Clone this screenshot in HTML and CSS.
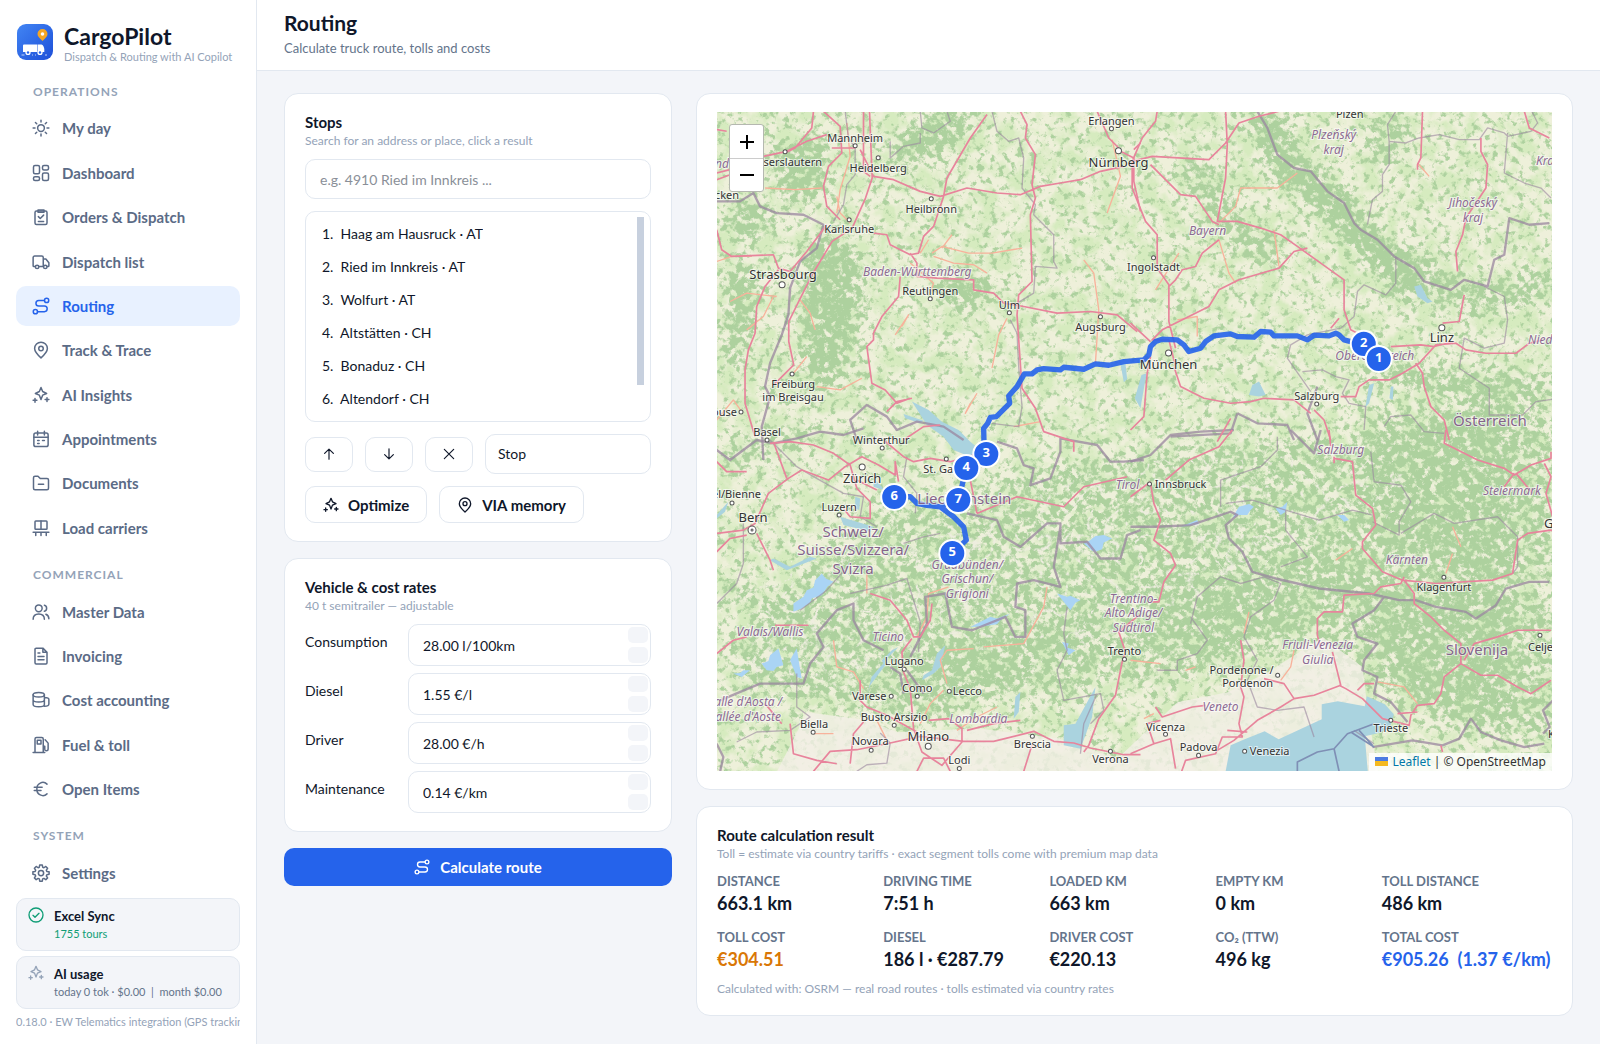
FILE: index.html
```html
<!DOCTYPE html>
<html lang="en">
<head>
<meta charset="utf-8">
<title>CargoPilot – Routing</title>
<meta name="viewport" content="width=device-width, initial-scale=1">
<link rel="stylesheet" href="styles.css">
</head>
<body>
<svg class="sprite" aria-hidden="true">
  <symbol id="i-sun" viewBox="0 0 24 24"><circle cx="12" cy="12" r="4.5"/><path d="M12 1.5v2.5M12 20v2.500M1.500 12H4M20 12h2.500M4.600 4.600l1.700 1.700M17.700 17.700l1.700 1.700M4.600 19.400l1.700-1.700M17.700 6.300l1.700-1.700"/></symbol>
  <symbol id="i-grid" viewBox="0 0 24 24"><rect x="2" y="2" width="8" height="11" rx="2"/><rect x="14" y="2" width="8" height="6" rx="2"/><rect x="2" y="17" width="8" height="5" rx="2"/><rect x="14" y="12" width="8" height="10" rx="2"/></symbol>
  <symbol id="i-clip" viewBox="0 0 24 24"><rect x="4" y="4" width="16" height="18" rx="2"/><path d="M8 2.500h8v3H8zM8.500 11.500l2.500 2.500 4.500-4.500M8.500 18h7"/></symbol>
  <symbol id="i-truck" viewBox="0 0 24 24"><path d="M4 18H2.500a1 1 0 0 1-1-1V6a2 2 0 0 1 2-2H13a2 2 0 0 1 2 2v12H9.500M15 8h3.500l4 5v4a1 1 0 0 1-1 1H20.500"/><circle cx="6.800" cy="18.500" r="2.300"/><circle cx="17.700" cy="18.500" r="2.300"/></symbol>
  <symbol id="i-route" viewBox="0 0 24 24"><circle cx="4.500" cy="19.500" r="2.800"/><circle cx="19.500" cy="4.500" r="2.800"/><path d="M16.500 4.500H9a3.700 3.700 0 0 0 0 7.500h7.500a3.700 3.700 0 0 1 0 7.500H7.500"/></symbol>
  <symbol id="i-pin" viewBox="0 0 24 24"><path d="M12 22.500c-5-4.500-8.500-8-8.500-12.500a8.500 8.500 0 0 1 17 0c0 4.500-3.500 8-8.500 12.500z"/><circle cx="12" cy="10" r="3"/></symbol>
  <symbol id="i-spark" viewBox="0 0 24 24"><path d="M12 2l2.200 5.300L19.500 10l-5.300 2.200L12 18l-2.200-5.800L4.500 10l5.300-2.700z"/><path d="M4 16.500v5M1.500 19h5M20 15.500v5M17.500 18h5"/></symbol>
  <symbol id="i-cal" viewBox="0 0 24 24"><rect x="2.500" y="4" width="19" height="18" rx="2.500"/><path d="M7.500 1.500v5M16.500 1.500v5M2.500 9.500h19M7.500 14h2M14 14h2.500M7.500 18h2"/></symbol>
  <symbol id="i-folder" viewBox="0 0 24 24"><path d="M2 5a2 2 0 0 1 2-2h4l3 3h9a2 2 0 0 1 2 2v11a2 2 0 0 1-2 2H4a2 2 0 0 1-2-2zM8.500 13.500h7"/></symbol>
  <symbol id="i-pallet" viewBox="0 0 24 24"><rect x="4" y="2.500" width="16" height="11" rx="1"/><path d="M12 2.500v11M1.500 17.500h21M5 17.500v4.500M12 17.500v4.500M19 17.500v4.500"/></symbol>
  <symbol id="i-users" viewBox="0 0 24 24"><circle cx="9" cy="7" r="4.500"/><path d="M1.500 21.500c0-4.500 3-7 7.500-7s7.500 2.500 7.500 7M16.500 3c4 .8 4 7.200 0 8M18.500 15c2.500 1 4 3.300 4 6"/></symbol>
  <symbol id="i-doc" viewBox="0 0 24 24"><path d="M14.500 1.500H5.500a1.500 1.500 0 0 0-1.500 1.500v18a1.500 1.500 0 0 0 1.500 1.500h13a1.500 1.500 0 0 0 1.500-1.500V7zM14.500 1.500V7H20M8 8h2.500M8 12.500h8M8 17h8"/></symbol>
  <symbol id="i-coins" viewBox="0 0 24 24"><ellipse cx="9" cy="5" rx="7.500" ry="3"/><path d="M1.500 5v13c0 4 15 4 15 0V5M1.500 11.500c0 4 15 4 15 0M16.500 8.500c3.500 0 6 1.200 6 2.800v6c0 1.700-2.500 3-6 3"/></symbol>
  <symbol id="i-fuel" viewBox="0 0 24 24"><path d="M4 22V4a2 2 0 0 1 2-2h7a2 2 0 0 1 2 2v18M1.500 22H17M7 5.500h5v5H7zM15 13.500h2v4a2 2 0 0 0 4.500 0V9.500l-4-4.500"/></symbol>
  <symbol id="i-euro" viewBox="0 0 24 24"><path d="M20 5.500A8 8 0 0 0 6.500 12 8 8 0 0 0 20 18.500M3 9.500h10.500M3 14h9"/></symbol>
  <symbol id="i-gear" viewBox="0 0 24 24"><circle cx="12" cy="12" r="3.500"/><path d="M9.800 4.300L10.300 1.300h3.400l.5 3 1.700.7 2.500-1.700 2.400 2.400-1.700 2.500.7 1.700 3 .5v3.400l-3 .5-.7 1.700 1.700 2.500-2.400 2.400-2.500-1.700-1.700.7-.5 3h-3.400l-.5-3-1.700-.7-2.500 1.700-2.400-2.400L4.900 16l-.7-1.700-3-.5v-3.400l3-.5L4.900 8.200 3.200 5.700l2.400-2.400L8.100 5z"/></symbol>
  <symbol id="i-check" viewBox="0 0 24 24"><circle cx="12" cy="12" r="10.500"/><path d="M7.500 12.500l3 3 6-6"/></symbol>
  <symbol id="i-up" viewBox="0 0 24 24"><path d="M12 21V4M4.500 11L12 3.500l7.500 7.500"/></symbol>
  <symbol id="i-down" viewBox="0 0 24 24"><path d="M12 3v17M4.500 13l7.500 7.500 7.500-7.500"/></symbol>
  <symbol id="i-x" viewBox="0 0 24 24"><path d="M4 4l16 16M20 4L4 20"/></symbol>
</svg>

<div class="app">
  <aside class="sidebar">
    <div class="brand">
      <svg class="logo" viewBox="0 0 36 36" aria-hidden="true">
        <defs><linearGradient id="lg" x1="0" y1="0" x2="1" y2="1"><stop offset="0" stop-color="#4285f4"/><stop offset="1" stop-color="#1d4fd8"/></linearGradient></defs>
        <rect width="36" height="36" rx="9" fill="url(#lg)"/>
        <path d="M25.500 17c-3-3-5-4.600-5-7a5 5 0 0 1 10 0c0 2.400-2 4-5 7z" fill="#f5a623"/><circle cx="25.500" cy="10" r="1.800" fill="#fff"/>
        <path d="M7 20.500h13.500V28H6v-6.500a1 1 0 0 1 1-1zM21 20.500h3.500c1.500 0 2.500 2.500 2.800 4.500V28H21z" fill="#fff"/>
        <circle cx="11" cy="28.500" r="2.600" fill="#fff"/><circle cx="23" cy="28.500" r="2.600" fill="#fff"/><circle cx="11" cy="28.500" r="1.200" fill="#2563eb"/><circle cx="23" cy="28.500" r="1.200" fill="#2563eb"/>
        <path d="M4.500 31h3M15 31h1M18 31h1M28 31h2" stroke="#fff" stroke-opacity=".7"/>
      </svg>
      <div><div class="brand-name">CargoPilot</div><div class="brand-sub">Dispatch &amp; Routing with AI Copilot</div></div>
    </div>
    <nav class="nav">
      <h2 class="nav-head">OPERATIONS</h2>
      <a class="nav-item" href="#"><svg class="ico"><use href="#i-sun"/></svg>My day</a>
      <a class="nav-item" href="#"><svg class="ico"><use href="#i-grid"/></svg>Dashboard</a>
      <a class="nav-item" href="#"><svg class="ico"><use href="#i-clip"/></svg>Orders &amp; Dispatch</a>
      <a class="nav-item" href="#"><svg class="ico"><use href="#i-truck"/></svg>Dispatch list</a>
      <a class="nav-item active" href="#" aria-current="page"><svg class="ico"><use href="#i-route"/></svg>Routing</a>
      <a class="nav-item" href="#"><svg class="ico"><use href="#i-pin"/></svg>Track &amp; Trace</a>
      <a class="nav-item" href="#"><svg class="ico"><use href="#i-spark"/></svg>AI Insights</a>
      <a class="nav-item" href="#"><svg class="ico"><use href="#i-cal"/></svg>Appointments</a>
      <a class="nav-item" href="#"><svg class="ico"><use href="#i-folder"/></svg>Documents</a>
      <a class="nav-item" href="#"><svg class="ico"><use href="#i-pallet"/></svg>Load carriers</a>
      <h2 class="nav-head">COMMERCIAL</h2>
      <a class="nav-item" href="#"><svg class="ico"><use href="#i-users"/></svg>Master Data</a>
      <a class="nav-item" href="#"><svg class="ico"><use href="#i-doc"/></svg>Invoicing</a>
      <a class="nav-item" href="#"><svg class="ico"><use href="#i-coins"/></svg>Cost accounting</a>
      <a class="nav-item" href="#"><svg class="ico"><use href="#i-fuel"/></svg>Fuel &amp; toll</a>
      <a class="nav-item" href="#"><svg class="ico"><use href="#i-euro"/></svg>Open Items</a>
      <h2 class="nav-head">SYSTEM</h2>
      <a class="nav-item" href="#"><svg class="ico"><use href="#i-gear"/></svg>Settings</a>
    </nav>
    <div class="status ok"><svg class="ico small"><use href="#i-check"/></svg><div><b>Excel Sync</b><span>1755 tours</span></div></div>
    <div class="status"><svg class="ico small"><use href="#i-spark"/></svg><div><b>AI usage</b><span>today 0 tok · $0.00 &nbsp;|&nbsp; month $0.00</span></div></div>
    <div class="version">0.18.0 · EW Telematics integration (GPS tracking)</div>
  </aside>

  <div class="page">
    <header class="top"><h1>Routing</h1><p>Calculate truck route, tolls and costs</p></header>
    <main class="content">
      <div class="col">
        <section class="card stops">
          <div class="card-head"><h3>Stops</h3><p>Search for an address or place, click a result</p></div>
          <input class="field" type="text" aria-label="Search address" placeholder="e.g. 4910 Ried im Innkreis ...">
          <div class="stop-box">
            <ol class="stop-list">
              <li>1.&nbsp; Haag am Hausruck · AT</li>
              <li>2.&nbsp; Ried im Innkreis · AT</li>
              <li>3.&nbsp; Wolfurt · AT</li>
              <li>4.&nbsp; Altstätten · CH</li>
              <li>5.&nbsp; Bonaduz · CH</li>
              <li>6.&nbsp; Altendorf · CH</li>
            </ol>
            <div class="thumb"></div>
          </div>
          <div class="row">
            <button class="btn square" aria-label="Move up"><svg class="ico tiny"><use href="#i-up"/></svg></button>
            <button class="btn square" aria-label="Move down"><svg class="ico tiny"><use href="#i-down"/></svg></button>
            <button class="btn square" aria-label="Remove"><svg class="ico tiny"><use href="#i-x"/></svg></button>
            <select class="field select" aria-label="Stop type"><option>Stop</option></select>
          </div>
          <div class="row">
            <button class="btn"><svg class="ico small"><use href="#i-spark"/></svg>Optimize</button>
            <button class="btn"><svg class="ico small"><use href="#i-pin"/></svg>VIA memory</button>
          </div>
        </section>

        <section class="card">
          <div class="card-head"><h3>Vehicle &amp; cost rates</h3><p>40 t semitrailer — adjustable</p></div>
          <div class="rates">
            <label for="r1">Consumption</label><div class="spin"><input id="r1" type="text" value="28.00 l/100km"><div class="steps"><button aria-label="Increase"></button><button aria-label="Decrease"></button></div></div>
            <label for="r2">Diesel</label><div class="spin"><input id="r2" type="text" value="1.55 €/l"><div class="steps"><button aria-label="Increase"></button><button aria-label="Decrease"></button></div></div>
            <label for="r3">Driver</label><div class="spin"><input id="r3" type="text" value="28.00 €/h"><div class="steps"><button aria-label="Increase"></button><button aria-label="Decrease"></button></div></div>
            <label for="r4">Maintenance</label><div class="spin"><input id="r4" type="text" value="0.14 €/km"><div class="steps"><button aria-label="Increase"></button><button aria-label="Decrease"></button></div></div>
          </div>
        </section>
        <button class="primary"><svg class="ico small"><use href="#i-route"/></svg>Calculate route</button>
      </div>

      <div class="col">
        <section class="card map-card">
          <div class="map">
            <svg class="tiles" viewBox="0 0 834 659" preserveAspectRatio="xMidYMid slice" role="img" aria-label="Route map">
              <defs>
                <filter id="forest" x="0" y="0" width="834" height="659" filterUnits="userSpaceOnUse" color-interpolation-filters="sRGB">
                  <feGaussianBlur in="SourceAlpha" stdDeviation="8" result="d"/>
                  <feTurbulence type="fractalNoise" baseFrequency=".15" numOctaves="5" seed="7"/>
                  <feColorMatrix values="0 0 0 0 0  0 0 0 0 0  0 0 0 0 0  1 0 0 0 0" result="n"/>
                  <feComposite in="d" in2="n" operator="arithmetic" k2=".32" k3="1" k4="-.4"/>
                  <feComponentTransfer result="m"><feFuncA type="linear" slope="6" intercept="-.850"/></feComponentTransfer>
                  <feFlood flood-color="#add19e"/><feComposite in2="m" operator="in"/>
                </filter>
                <filter id="rock" x="0" y="0" width="834" height="659" filterUnits="userSpaceOnUse" color-interpolation-filters="sRGB">
                  <feGaussianBlur in="SourceAlpha" stdDeviation="14" result="d"/>
                  <feTurbulence type="turbulence" baseFrequency=".04" numOctaves="5" seed="12"/>
                  <feColorMatrix values="0 0 0 0 0  0 0 0 0 0  0 0 0 0 0  -1 0 0 0 .5" result="n"/>
                  <feComposite in="d" in2="n" operator="arithmetic" k2=".3" k3="1" k4="-.3"/>
                  <feComponentTransfer result="m"><feFuncA type="linear" slope="8" intercept="-1.500"/></feComponentTransfer>
                  <feFlood flood-color="#eeeddf"/><feComposite in2="m" operator="in"/>
                </filter>
                <filter id="meadow" x="0" y="0" width="834" height="659" filterUnits="userSpaceOnUse" color-interpolation-filters="sRGB">
                  <feTurbulence type="fractalNoise" baseFrequency=".05" numOctaves="4" seed="3"/>
                  <feColorMatrix values="0 0 0 0 .84  0 0 0 0 .92  0 0 0 0 .75  4 0 0 0 -1.600"/>
                </filter>
              </defs>
              <rect width="834" height="659" fill="#eef0da"/>
              <rect width="834" height="659" filter="url(#meadow)"/>
              <g filter="url(#forest)">
                <path d="M90 130l35-10 20 40-5 60-25 60-25-10-5-70zM50 40l55-20 5 60-40 10zM0 110l40-20 20 15-30 25zM10 150l30 10-5 60-25 50zM175 30l50-30h40l-40 40-45 15zM210 170l50-10 20 20-40 20z" fill-opacity=".8"/>
                <path d="M545 0l25 55 35 25 40 45 35 30 10 30" fill="none" stroke="#000" stroke-width="30" stroke-opacity=".9"/>
                <path d="M675 0l-10 50M690 145l40 35 40 5 64-15M470 50l40 60 50 40M640 255l90 15 104 10" fill="none" stroke="#000" stroke-width="26" stroke-opacity=".6"/>
                <path d="M150 400l90-20 110-30 110-10 90-10 110-5 134-60v345l-90-10-100-60-60-20-60 40-70 10-90-30-40 40-70 30-90-20-60-20-60-30z" fill-opacity=".45"/>
                <path d="M0 350l100-30M0 470l90 40 60 20M20 560l80 20" fill="none" stroke="#000" stroke-width="22" stroke-opacity=".4"/>
                <path d="M640 300h194v170l-90-10-90-30zM650 480l184 0v150l-100-10-60-60z" fill-opacity=".45"/>
                <path d="M200 530l110-10 60-10 10 60-40 20-130-20zM440 460l110 0 40 40-20 40-80 10-50-30zM560 440l80 10 40 30-70 10z" fill-opacity=".4"/>
              </g>
              <g filter="url(#rock)"><path d="M20 560l20-100 120-40 60-10 120-50 120-20 160-5 90 25-30 60-110 20-70 50-80 20-70 40-120-10-60 40-110 10z" fill-opacity=".62"/></g>
              <path d="M90 600l60 8 30 12 80-4 80 10 60 20 30-28 30-28 50-10 40-20 55-35 40 30 5 45 10 59H60z" fill="#f2efe6" opacity=".8"/>
              <path d="M508 659l5-26 14-6 20-8 14 8 43-20v-15l16-3 27 5 2-10 18 8 9 10-4 14-12 5-13 3 3 35z" fill="#aad3df"/>
              <g transform="translate(-27 -22) scale(.33333)" fill="#aad3df">
                <path d="M665 935l50 25 40 35 50 25 35 35 30 25-20 25-60-25-30-40-50-35z"/><path d="M640 972l60 20-10 8-45-15zM1290 822l10 55 10-10-5-45z"/>
                <path d="M1350 955l18-105-15 5-20 70zM1675 915l10-30 20-10 20 40-20 5zM2025 945l10-60 15-5-15 60-15 15zM2100 890h8l-2 40-10-5zM2170 590l20-5 20 40 15 10-15 5-30-20z"/>
                <path d="M450 1280l100 30-10 15-80-20zM495 1220l15 5-3 35-12-5zM240 1410l50 30 90-35-20-5-60 30-50-25zM80 1275l35-40-10 30-25 20zM575 1710l30-30 20-10-35 35-5 20-45 60-8 25 12-50 35-40zM740 1690l25-25-15 65-20 20-35 20 5-15 25-15zM1120 1905l35-5 60-110-10 90-35 95-50-10zM975 1820l15-15-5 60-15 20zM550 1190l30 10-5-10-25-25z"/>
              </g>
              <g transform="translate(-27 318) scale(.33333)" fill="#aad4f5"><path d="M310 520l30-20 10-20 20-8 5-22 20-20 12 15 23 10-18 15-17 25-30 10-5 12-25 18-25 10zM215 700l20-8 5-17 25-20 15 50-20 5-10 12-20-2zM300 690l8-15 12-20 8 50 7 40-15-5zM130 730l20-2 10-8 20 0-25 20zM1180 340l20-10 15-12 25-3 25 10-25 12-5 20-20 8-10-3zM1100 490l30 10 10-3 30 13-15 8-15 22zM840 590l60-30 20 5 40-15-30 20-10 12-40 6zM1115 635l20 5-5 12 25 8-20 15z"/></g>
              <g transform="translate(413 318) scale(.33333)" fill="#aad4f5"><path d="M305 265l8-15 12-20 30-8 15 8-10 10-10 15-25 0zM435 235l20-5 15-15-5 30-15 10zM150 290l50-20 5 12zM620 255l20 0 15 15-15 5z"/></g>

              <g class="trunk">
                <g transform="translate(-27 -22) scale(.33333)"><path d="M80 515l45-15 60 0M225 295l90 5 80-5M440 320l10 50 30 30M470 100l10 100-30 100-10 70M635 710l20-35-40 60M725 490l30-20 80 20 70 0 90-15M730 500l60 20 60 5 40 25M755 475l30-40M690 490l25-40M660 520l70 60-10 30M950 685l-25 50-20 100M1180 510l30 40 15 110-10 160M1265 150l25 110-40 110M120 635l50-25 90 10M250 620l-30 60-50 40M330 630l30 40 15 50M80 990l50-60 25 35M310 850l40-50M380 890l70 10 65-35M970 1010l80-15M840 940l-15 30 35-60"/></g>
                <g transform="translate(413 -22) scale(.33333)"><path d="M265 400l50-50 15-55 110 0 60-45M265 450l30 100 20 30M430 420l15 110M140 690l60-10 0 60M860 220l35 40M75 600l70-110"/></g>
                <g transform="translate(-27 318) scale(.33333)"><path d="M530 430l0 60M680 620l30-60 5-70 60-20M430 630l10 80 50 15 30 50M690 880l30-60 40-40M770 760l-20-70 20-30 80-5M880 650l120-10 60-110 10-60M800 900l60-40 60-30M560 870l30 60M370 910h60"/></g>
                <g transform="translate(413 318) scale(.33333)"><path d="M740 755l80 15 40 50M340 610l15-65M490 660l-10 50-30 40M165 720l30-10M0 690l90 10M70 850l-30 15M965 290l25 60M965 370l-20 60M615 390l50-35"/></g>
              </g>
              <g class="border-line thin">
                <g transform="translate(-27 -22) scale(.33333)"><path d="M465 65l10 80 20 30 0 80-25 30-10 60-30 50M690 65l5 50 35 15 50-35-10-30M690 130l0 30-50 10-40 35 0-50M905 65l15 60 35 30 30-10 15 60-5 90 40 50-5 30 60 60 0 80 10 20-65-5-5 80-50 30M960 690l20 40 5 100 10 120-10 60-80-10"/></g>
                <g transform="translate(413 -22) scale(.33333)"><path d="M795 65l-25 40 5 50 50 5 40-15 60-10 60 15 60 0 25-35 50 15 10 10 70-15 20-25-20-40M1130 130l-10 120 60 30 50 15 30 30M775 155l0 70-20 30 0 50-30 25-15 75M795 500l0 80-30 35-65-30-20 20-10 75-40 35-100 20-50 30-10 40 70 100M1060 590l60 30 10 70-10 70-60 15-60-30-15 90 90 60 0 80 100 0 40-40 70-10M515 845l60-5 40 20 40 10-20 40 20 30 50 10-5 70M760 1010l20-30 60-5 40 50 60 5"/></g>
                <g transform="translate(-27 318) scale(.33333)"><path d="M240 30l80 80 50 30 90 50 60 10-10 60 50 30M160 280l0 120-20 60-60 60M650 80l-10 60 40 50-5 60M640 340l60-20 50-10M320 730l0 100 40 30-60 40-100 5-60 30M480 490l110-25 60-20 40 130-5 90M330 540l80-60 70-80M1130 530l-10 80 10 50-30 60 20 90 110-20 10 50-40 40M1170 970l10-90 40-90M500 1023l30-20 60-5 10-60-30-30"/></g>
                <g transform="translate(413 318) scale(.33333)"><path d="M440 20l0 40-50 50-120 40 0 80M285 220l80-10 100 30 100 30 100-30 60 15M720 65l10 90 80 10 30 50-35 60 0 40-80-40M810 310l100-60 60 30 130-20 60 60 0 90-15 20M465 240l0 60 65 80-80 30M180 580l20-80 70-60 60 20 70-20 50 20-20 50-70 50-20 60 40 70-30 60 30 80 60 10 80-10 30 90M180 560l50 70-30 40-60 20 0 30-60 0M670 900l60 40"/></g>
              </g>
              <g class="border-line">
                <g transform="translate(-27 -22) scale(.33333)"><path d="M80 335l70 0 40-25 20 40 50 20 80 5 60 30-20 70-50 40-30 80-5 80-20 60-35 85-15 70 15 30-25 90 5 100M500 1050l-20-60 50-45 60 35 30 40 60-25 80 15 60 40"/></g>
                <g transform="translate(413 -22) scale(.33333)"><path d="M380 65l30 50 30 80 50 40 50 10 50 60 50 35 30 60 20 20 50 30 50 50 60 35 30 40 80 25 40-30 70 20 20-80 30-15 15-110 60 20 60-5M320 970l-20 60-180 10M320 970l60 30 90 5 20 45M560 890l-30 80 30 80"/></g>
                <g transform="translate(-27 318) scale(.33333)"><path d="M80 60l40 30 80-60 50 10 70-15 70-20 70 10 60-20M920 35l60 20 20 50 30 10-10 50 60-20 30-80 0-40 110 20 40 50 40 0 60-5M830 250l90 20 20 50 50 30 80-70 40 0 0 60 80-5 40 50 60 0 20-70 40-15M1110 290l-20 120 20 60-80-20-50 10-5 70 30 10 0 80-30 0-30-60-100 40-60-10-20-100-60 10 5 80-50 100M580 660l-60-30-30-60 0-50-50 20-60 70 20 40-40 50-20 60-130 0-120 50M80 940l20 40-10 45M600 710l30 20 10 60M650 720l50 70"/></g>
                <g transform="translate(413 318) scale(.33333)"><path d="M0 95l60-20 60-60 90-10 100-5M480 0l70 70 20-70M0 290l80 0 100-5 120-40 20 10-35 30 10 40 40 40 30 60 70 20 130 30 150 15 90 20 50 0 60 20 90 15 30 20 60-40 30-50 70-20 60 0M760 500l-30 40-65 40 15 40 60 20-40 50-5 30 45 20-10 50 50 25 50 60M725 950l120-20 90 15 50-20 35-60 30 40 60 25 70 20 60-10M1266 810l-30 30 20 50-20 20"/></g>
              </g>
              <g class="motor">
                <g transform="translate(-27 -22) scale(.33333)"><path d="M80 120l30 5M220 200l70-15 60-30 60-20M370 65l-5 50-50 60-30 15M400 65l50 45 5 80-40 40-15 60 10 60 40 40M520 65l0 180 20 15M538 65l8 200-20 60-40 90-60 40-60 100-40 80-30 60 0 60 15 70-60 60M425 175h70M510 180l40 80 60 10 80 35 60 15 80-25 90 15 70 5 60-25 60-10 60-10 60-25 70-15M890 75l-50 70-70 120-10 55-30 90-30 30-15 50-25 5-60-30-10-30-40-5M660 490l20 30 0 40 60 5 110 5 0 30 60 10 30 30 60 10 100 20 100-5 80 10 60 50M990 65l20 40-5 40 30 50-10 90 10 40-15 50 5 200-40 40-5 60 15 220 40 60 25 70 90 30 0 30M80 420l15 60 30 20 125-5 15 40 35 10 50-60 60-80M265 540l-40 50-25 60-5 80-20 50-10 60 0 100 30 100M630 560l-5 60-50 60-25 50 0 20-20 20 15 110 40 20 35 40 40-15M1220 65l35 80 30 30M1290 185l40 20 0 70 20 90M1330 180l20-20M80 250l40-10M80 270l40-15M590 965l30-30 45-10M640 1050l60-40 50-5"/></g>
                <g transform="translate(413 -22) scale(.33333)"><path d="M80 65l-5 30-40 50-30 70 60-15 170 10 50-50 40-60 60-20 60-15 50-35M285 65l5 100-5 100-25 130 60 0 70 20 60 20 50 35 70 50 70 50 0 90 20 60 20 10M5 215l0 80 40 100 35 40 0 100 35 50 0 110 20 80M60 225l60 60 30 30 45 5 50 75 20 10M265 450l-50 40-20 40-40 10-20 30-20 20M530 475l-40 10-45 50-120 35-60 30-30 50-60 30-80 40-30 30 50 0 20 80M0 700l60 55M60 800l-10 50-10 130-40 40M130 830l20 60 70 35 80 15 60-5 40-10 90 5 50 40M300 985l-40 70M550 960l30 30 20 60M630 920l45 0 10-30 30-20 60 0 40-20 50-30 50-55 60-5 30 20 60 10 90 0 40-30 40-10M780 770l90-5 40 5 60-15M855 820l20 30 5 40 20 60 40 40 15 60M935 700l50-5 15-80M875 65l-5 140-10 20 0 15M1050 145l0 40 20 40-5 70-60 90-10 50-20 50 5 60M1180 65l15 50 60 30M600 715l25-30"/></g>
                <g transform="translate(-27 318) scale(.33333)"><path d="M80 310l80-10 35-20 40-90 60-45 40-25 80 30 50-40 50-30 50 25 50 30 0-40 10 60M240 40l60-5 70 10 60 25 50 35 20 70 40 40 0 50-60-5-20-25M80 365l40-40 50-10M200 310l40 80 10 30M290 145l-40-110M80 95l30 30 60 0M500 150l60 30M580 30l60 50 30 15 50-10 60 10 70-20M840 150l20 100M860 250l120-50 140 30 60-60 130-30M540 490l60 20 50 60 20 50 20 0 30-50 5-50M665 625l-30 40 5 60 20 50 10 120 25 70 60 40 60-70 0-40-40-30-60 5M510 750l0 60 20 20 60 25 90 50M480 1000l10-90 30-35M300 880l10 90 70 20 60 10M370 1023l50-60 80-5 100-20 90-20 130 15 90 0 120-30 60 30 60 5 50 15 100 20 50 0M680 1023l20-40 60 0 20 40M1000 1023l25-80M80 670l50-40 40-10M255 585l100 0M275 880l-50-60M830 900l80-20 80-10M1180 965l15-20 30-80 50-70 20-100 10-30-20-60 60-50"/></g>
                <g transform="translate(413 318) scale(.33333)"><path d="M0 200l60-45M60 160l10 60 20 50-20 60 50 40 15 35-35 50-15 60-25 0M105 150l70-60 90-40 40-50M610 80l0 20M610 85l55 10 10 100 50 40 10 50-40 50 0 20 60 70 60 25 100 10 170-10 60-20 15-100 30-20 70-10 40 10 20-10M595 0l5 50M820 440l-10 20-60 10-20 20-90 5-5 50-55 0-20 20 0 50 10 40M820 450l30 40 0 30 50 40 40 40 50 40 0 60 60 35 50 0 60 35 40 20 60-40M990 700l-50 40-10 50-20 30-50 5-20 30-5 30-80-20-60-60-50-30-20-10M1000 690l30-50 70-20 60-20 100 0M605 665l25 100-80 30-60 10-40 25-70 40-70 60-50 30M400 745l60 15 30 45M680 780l20-20 30 0M330 630l10 60-10 80 10 30-15 80 10 40-60 0-20 50-90 20-25 70M75 830l20 30 90-30 40-5M90 870l-40 10 20 60 50-15 15 90M0 970l70-30M290 900l60 5M945 0l-5 40 60 30 40 20 80 25 30 20 50-30 60-20 0-20M1150 130l-30 40M1240 100l20 40-15 50 20 70M1155 130l50 60M800 850l60-5M930 945l5 20"/></g>
              </g>
              <g class="ferry" transform="translate(413 318) scale(.33333)"><path d="M500 1023V995l60-30 50-10 40-45 80-30M610 955l15 68M660 905l70 45M685 900l40 45"/></g>

              <path class="route" transform="translate(-27 -22) scale(.33333)" d="M2018 782L1980 755 1960 750 1945 735 1935 730 1915 738 1870 736 1850 750 1820 738 1750 738 1740 727 1710 725 1690 742 1640 740 1620 732 1570 738 1545 755 1530 775 1495 785 1480 765 1460 750 1415 748 1395 755 1380 770 1375 795 1360 810 1300 815 1255 826 1215 822 1180 838 1120 832 1110 840 1060 836 1040 840 1025 852 1002 852 980 890 955 918 958 940 918 980 900 982 892 1000 880 1015 882 1095 828 1133 805 1230 750 1250 710 1246 680 1240 660 1220 612 1220M750 1250L790 1280 820 1310 828 1350 785 1390"/>

              <g class="dots">
                <circle cx="138" cy="34" r="2"/><circle cx="68" cy="40" r="2"/><circle cx="161" cy="46" r="2"/><circle cx="214" cy="87" r="2"/><circle cx="132" cy="108" r="2"/><circle cx="394" cy="17" r="2"/><circle cx="401" cy="39" r="3"/><circle cx="65" cy="173" r="3"/><circle cx="213" cy="187" r="2"/><circle cx="292" cy="201" r="2"/><circle cx="383" cy="205" r="2"/><circle cx="75" cy="262" r="2"/><circle cx="24" cy="300" r="2"/><circle cx="50" cy="328" r="2"/><circle cx="165" cy="336" r="2"/><circle cx="145" cy="355" r="3"/><circle cx="229" cy="347" r="2"/><circle cx="15" cy="391" r="2"/><circle cx="35" cy="418" r="4"/><circle cx="35" cy="418" r="1"/><circle cx="122" cy="403" r="2"/><circle cx="187" cy="557" r="2"/><circle cx="200" cy="584" r="2"/><circle cx="174" cy="584" r="2"/><circle cx="232" cy="579" r="2"/><circle cx="96" cy="620" r="2"/><circle cx="177" cy="613" r="2"/><circle cx="154" cy="638" r="2"/><circle cx="211" cy="634" r="3"/><circle cx="242" cy="656" r="2"/><circle cx="315" cy="624" r="2"/><circle cx="393" cy="639" r="2"/><circle cx="407" cy="547" r="2"/><circle cx="436" cy="146" r="2"/><circle cx="724" cy="216" r="3"/><circle cx="451" cy="241" r="3"/><circle cx="599" cy="292" r="2"/><circle cx="432" cy="372" r="2"/><circle cx="726" cy="465" r="2"/><circle cx="822" cy="523" r="2"/><circle cx="560" cy="563" r="2"/><circle cx="448" cy="622" r="2"/><circle cx="481" cy="643" r="2"/><circle cx="527" cy="639" r="2"/><circle cx="673" cy="608" r="2"/>
              </g>
              <g class="city">
                <text x="138" y="30">Mannheim</text><text x="394" y="13">Erlangen</text><text class="end" x="105" y="54">Kaiserslautern</text><text x="161" y="60">Heidelberg</text><text class="end" x="22" y="87">Saarbrücken</text><text x="214" y="101">Heilbronn</text><text x="132" y="121">Karlsruhe</text><text x="213" y="183">Reutlingen</text><text x="292" y="197">Ulm</text><text x="383" y="219">Augsburg</text><text x="76" y="276">Freiburg</text><text x="76" y="289">im Breisgau</text><text class="end" x="20" y="304">Mulhouse</text><text x="50" y="324">Basel</text><text x="164" y="332">Winterthur</text><text class="start" x="206" y="361">St. Gallen</text><text class="end" x="44" y="386">Biel/Bienne</text><text x="122" y="399">Luzern</text><text x="187" y="553">Lugano</text><text x="200" y="580">Como</text><text x="250" y="583">Lecco</text><text x="152" y="588">Varese</text><text x="97" y="616">Biella</text><text x="177" y="609">Busto Arsizio</text><text x="153" y="633">Novara</text><text x="242" y="652">Lodi</text><text x="315" y="636">Brescia</text><text x="393" y="651">Verona</text><text x="407" y="543">Trento</text><text x="632" y="6">Plzeň</text><text x="436" y="159">Ingolstadt</text><text x="599" y="288">Salzburg</text><text x="463" y="376">Innsbruck</text><text x="726" y="479">Klagenfurt</text><text class="start" x="810" y="539">Celje</text><text x="524" y="562">Pordenone /</text><text x="530" y="575">Pordenon</text><text x="448" y="619">Vicenza</text><text x="481" y="639">Padova</text><text x="552" y="643">Venezia</text><text x="673" y="620">Trieste</text><text class="start" x="830" y="626">Karlovac</text>
              </g>
              <g class="city big">
                <text x="401" y="55">Nürnberg</text><text x="66" y="167">Strasbourg</text><text x="145" y="371">Zürich</text><text x="36" y="410">Bern</text><text x="211" y="629">Milano</text><text x="724" y="230">Linz</text><text x="451" y="257">München</text><text class="start" x="826" y="416">Graz</text>
              </g>
              <g class="region">
                <text x="200" y="164">Baden-Württemberg</text><text class="end" x="12" y="56">Rheinland</text><text x="250" y="457">Graubünden/</text><text x="250" y="471">Grischun/</text><text x="250" y="486">Grigioni</text><text x="53" y="524">Valais/Wallis</text><text x="171" y="529">Ticino</text><text class="end" x="65" y="594">Valle d'Aosta /</text><text class="end" x="64" y="609">Vallée d'Aoste</text><text x="261" y="611">Lombardia</text><text x="416" y="491">Trentino-</text><text x="416" y="505">Alto Adige/</text><text x="416" y="520">Südtirol</text><text x="410" y="377">Tirol</text><text x="616" y="27">Plzeňský</text><text x="616" y="42">kraj</text><text class="start" x="818" y="53">Kraj</text><text x="755" y="95">Jihočeský</text><text x="755" y="110">kraj</text><text x="490" y="123">Bayern</text><text class="start" x="810" y="232">Niederösterreich</text><text x="657" y="248">Oberösterreich</text><text x="623" y="342">Salzburg</text><text x="794" y="383">Steiermark</text><text x="689" y="452">Kärnten</text><text x="600" y="537">Friuli-Venezia</text><text x="600" y="552">Giulia</text><text x="503" y="599">Veneto</text>
              </g>
              <g class="country">
                <text x="136" y="425">Schweiz/</text><text x="136" y="443">Suisse/Svizzera/</text><text x="136" y="462">Svizra</text><text x="247" y="392">Liechtenstein</text><text x="772" y="314">Österreich</text><text x="759" y="543">Slovenija</text>
              </g>
              <g class="pins">
                <circle cx="646" cy="232" r="13"/><text x="646" y="235">2</text>
                <circle cx="661" cy="247" r="13"/><text x="661" y="250">1</text>
                <circle cx="269" cy="342" r="13"/><text x="269" y="345">3</text>
                <circle cx="249" cy="356" r="13"/><text x="249" y="359">4</text>
                <circle cx="235" cy="441" r="13"/><text x="235" y="444">5</text>
                <circle cx="177" cy="385" r="13"/><text x="177" y="388">6</text>
                <circle cx="241" cy="388" r="13"/><text x="241" y="391">7</text>
              </g>
            </svg>
            <div class="zoom"><button aria-label="Zoom in"><svg viewBox="0 0 14 14"><path d="M0 7h14M7 0v14"/></svg></button><button aria-label="Zoom out"><svg viewBox="0 0 14 14"><path d="M0 7h14"/></svg></button></div>
            <div class="credit"><svg viewBox="0 0 13 9" aria-hidden="true"><path fill="#4c7be1" d="M0 0h13v5H0z"/><path fill="#f5b91f" d="M0 4h13v5H0z"/></svg><a href="#">Leaflet</a> | © OpenStreetMap</div>
          </div>
        </section>

        <section class="card">
          <div class="card-head"><h3>Route calculation result</h3><p>Toll = estimate via country tariffs · exact segment tolls come with premium map data</p></div>
          <dl class="results">
            <div><dt>DISTANCE</dt><dd>663.1 km</dd></div>
            <div><dt>DRIVING TIME</dt><dd>7:51 h</dd></div>
            <div><dt>LOADED KM</dt><dd>663 km</dd></div>
            <div><dt>EMPTY KM</dt><dd>0 km</dd></div>
            <div><dt>TOLL DISTANCE</dt><dd>486 km</dd></div>
            <div><dt>TOLL COST</dt><dd class="amber">€304.51</dd></div>
            <div><dt>DIESEL</dt><dd>186 l · €287.79</dd></div>
            <div><dt>DRIVER COST</dt><dd>€220.13</dd></div>
            <div><dt>CO₂ (TTW)</dt><dd>496 kg</dd></div>
            <div><dt>TOTAL COST</dt><dd class="blue">€905.26 &nbsp;(1.37 €/km)</dd></div>
          </dl>
          <p class="foot">Calculated with: OSRM — real road routes · tolls estimated via country rates</p>
        </section>
      </div>
    </main>
  </div>
</div>
</body>
</html>
```

FILE: styles.css
```css
* { box-sizing: border-box; }
body, h1, h2, h3, p, ol, dl, dd { margin: 0; padding: 0; }
body {
  font: 14px/20px Lato, "Liberation Sans", sans-serif;
  color: #0f172a;
  background: #f3f5f9;
}
button, input, select { font: inherit; color: inherit; }
button { cursor: pointer; }
.sprite { display: none; }

.app { display: flex; min-height: 100vh; }
.ico {
  width: 18px; height: 18px; flex: none;
  fill: none; stroke: currentColor; stroke-width: 2;
  stroke-linecap: round; stroke-linejoin: round;
}
.ico.small { width: 16px; height: 16px; }
.ico.tiny { width: 14px; height: 14px; }

/* Sidebar */
.sidebar {
  width: 257px; flex: none;
  display: flex; flex-direction: column;
  padding: 24px 16px 13px;
  background: #fff;
  border-right: 1px solid #e2e8f0;
}
.brand { display: flex; gap: 11px; height: 45px; padding-left: 1px; }
.logo { width: 36px; height: 36px; flex: none; }
.brand-name { font-size: 23px; line-height: 24px; font-weight: 700; }
.brand-sub { font-size: 11px; line-height: 18px; color: #94a3b8; white-space: nowrap; }
.nav { flex: 1; display: flex; flex-direction: column; justify-content: space-between; }
.nav-head {
  padding: 16px 17px 5px;
  font-size: 12px; line-height: 14px; font-weight: 700;
  letter-spacing: 1px; color: #94a3b8;
}
.nav-item {
  display: flex; align-items: center; gap: 12px;
  height: 40px; padding: 0 16px;
  font-size: 15px; font-weight: 700;
  color: #5b6b86; text-decoration: none; border-radius: 10px;
}
.nav-item.active { color: #2563eb; background: #e8f1ff; }
.status {
  display: flex; gap: 10px;
  margin-top: 5px; padding: 8px 11px;
  background: #f3f5f9; border: 1px solid #e2e8f0; border-radius: 10px;
  color: #94a3b8;
}
.status b { display: block; font-size: 13px; line-height: 18px; color: #0f172a; }
.status span { display: block; font-size: 11px; line-height: 17px; color: #64748b; white-space: nowrap; }
.status.ok, .status.ok span { color: #0f9d76; }
.version {
  margin-top: 4px;
  font-size: 11px; line-height: 18px; color: #94a3b8;
  white-space: nowrap; overflow: hidden;
}

/* Page frame */
.page { flex: 1; min-width: 0; display: flex; flex-direction: column; }
.top { padding: 10px 27px; background: #fff; border-bottom: 1px solid #e2e8f0; }
.top h1 { font-size: 21px; line-height: 26px; font-weight: 700; }
.top p { font-size: 13px; line-height: 24px; color: #64748b; }
.content {
  flex: 1;
  display: grid; grid-template-columns: 388px minmax(0, 1fr); gap: 24px;
  padding: 22px 27px 28px;
}
.col { display: flex; flex-direction: column; gap: 16px; }
.card {
  padding: 18px 20px;
  background: #fff; border: 1px solid #e2e8f0; border-radius: 14px;
}
.card-head { margin-bottom: 10px; }
.card-head h3 { font-size: 15px; line-height: 21px; font-weight: 700; }
.card-head p, .foot { font-size: 12px; line-height: 16px; color: #94a3b8; }

/* Stops */
.field {
  display: block; width: 100%; height: 40px; padding: 0 14px;
  background: #fff; border: 1px solid #e2e8f0; border-radius: 10px;
}
.field::placeholder { color: #8a8f98; }
.stop-box {
  display: flex; justify-content: space-between;
  height: 211px; margin: 12px 0; padding: 5px 6px;
  border: 1px solid #e2e8f0; border-radius: 10px;
}
.stop-list { list-style: none; padding-left: 10px; overflow: hidden; }
.stop-list li { line-height: 33px; }
.thumb { width: 7px; height: 168px; background: #c7d0de; }
.row { display: flex; align-items: center; gap: 12px; }
.row + .row { margin-top: 12px; }
.select { flex: 1; width: auto; padding: 0 12px; appearance: none; }
.btn {
  display: flex; align-items: center; gap: 9px;
  height: 37px; padding: 0 17px;
  font-size: 15px; font-weight: 700;
  background: #fff; border: 1px solid #e2e8f0; border-radius: 10px;
}
.btn.square { width: 48px; height: 35px; padding: 0; justify-content: center; }

/* Vehicle rates */
.rates { display: grid; grid-template-columns: 91px minmax(0, 1fr); gap: 7px 12px; }
.rates label { padding-top: 8px; }
.spin {
  display: flex; height: 42px; padding: 2px;
  border: 1px solid #e2e8f0; border-radius: 10px;
}
.spin input { flex: 1; min-width: 0; padding: 2px 12px 0; border: 0; background: none; }
.steps { display: flex; flex-direction: column; justify-content: space-between; width: 20px; }
.steps button { height: 16px; padding: 0; border: 0; border-radius: 5px; background: #f3f5f9; }
.primary {
  display: flex; align-items: center; justify-content: center; gap: 10px;
  height: 38px; border: 0; border-radius: 10px;
  font-size: 15px; font-weight: 700; color: #fff; background: #2563eb;
}

/* Map */
.map-card { flex: 1; display: flex; }
.map { position: relative; flex: 1; min-height: 480px; overflow: hidden; }
.tiles { position: absolute; inset: 0; width: 100%; height: 100%; }
.motor, .trunk, .border-line, .ferry, .route { fill: none; stroke-linejoin: round; }
.motor { stroke: #e8849c; stroke-width: 5; }
.trunk { stroke: #f8b29b; stroke-width: 4; }
.border-line { stroke: #9a869f; stroke-width: 7; stroke-opacity: .75; }
.border-line.thin { stroke-width: 4; stroke-opacity: .6; }
.ferry { stroke: #7f8fb5; stroke-width: 5; }
.route { stroke: #2563eb; stroke-width: 16; stroke-opacity: .9; stroke-linecap: round; }
.dots { fill: #fff; stroke: #555; stroke-width: 1; }
.tiles text {
  font-family: "Noto Sans", sans-serif; text-anchor: middle;
  paint-order: stroke; stroke: #fff; stroke-opacity: .6; stroke-width: 2px;
}
.tiles .city text { font-size: 11px; fill: #333; }
.tiles .city.big text { font-size: 13px; }
.tiles .region text { font-size: 12px; font-style: italic; fill: #8d6b93; }
.tiles .country text { font-size: 15px; fill: #85648a; }
.tiles text.end { text-anchor: end; }
.tiles text.start { text-anchor: start; }
.pins circle { fill: #2563eb; stroke: #fff; stroke-width: 2; }
.tiles .pins text { font-size: 13px; font-weight: 700; fill: #fff; stroke: none; }
.zoom {
  position: absolute; left: 12px; top: 12px;
  border: 1px solid #b5b8b0; border-radius: 3px; background: #fff;
}
.zoom button {
  display: flex; align-items: center; justify-content: center;
  width: 33px; height: 33px; padding: 0; border: 0; background: none;
}
.zoom button + button { border-top: 1px solid #ccc; }
.zoom svg { width: 14px; height: 14px; stroke: #000; stroke-width: 2; }
.credit {
  position: absolute; right: 0; bottom: 0;
  padding: 0 6px; line-height: 18px; color: #333;
  font-family: "Noto Sans", sans-serif; font-size: 12px;
  background: rgba(255, 255, 255, .8);
}
.credit svg { width: 13px; height: 9px; margin-right: 4px; }
.credit a { color: #0078a8; text-decoration: none; }

/* Results */
.results { display: grid; grid-template-columns: repeat(4, 166fr) 170fr; row-gap: 12px; margin-bottom: 9px; }
.results dt { font-size: 13px; line-height: 18px; font-weight: 700; color: #64748b; white-space: nowrap; }
.results dd { font-size: 18px; line-height: 26px; font-weight: 700; white-space: nowrap; }
.results .amber { color: #d97706; }
.results .blue { color: #2563eb; }
```
